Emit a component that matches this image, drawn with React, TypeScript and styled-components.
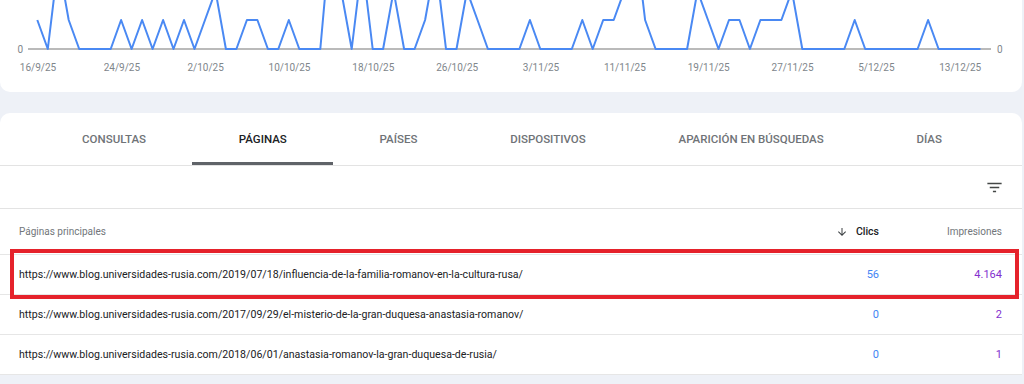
import styled, { createGlobalStyle } from "styled-components";

const GlobalStyle = createGlobalStyle`
  body {
    margin: 0;
    background: #eef1f7;
    font-family: Roboto, "Liberation Sans", sans-serif;
  }
`;

// clics por día, del 16/9/25 al 15/12/25
const clicks = [
  1, 0, 3, 1, 0, 0, 0, 0, 1, 0, 1, 0, 1, 0, 1, 0, 1, 2, 0, 0, 1, 1, 0, 0, 1, 0,
  0, 0, 4, 2, 0, 3, 0, 0, 2, 0, 0, 1, 3, 0, 0, 2, 1, 0, 0, 0, 0, 1, 0, 0, 0, 0,
  1, 0, 1, 1, 2, 4, 1, 0, 0, 0, 0, 2, 1, 0, 1, 1, 0, 1, 1, 1, 2, 0, 0, 0, 0, 0,
  1, 0, 0, 0, 0, 0, 0, 1, 0, 0, 0, 0, 0,
];

const dates = [
  "16/9/25", "24/9/25", "2/10/25", "10/10/25", "18/10/25", "26/10/25",
  "3/11/25", "11/11/25", "19/11/25", "27/11/25", "5/12/25", "13/12/25",
];

const tabs = ["CONSULTAS", "PÁGINAS", "PAÍSES", "DISPOSITIVOS", "APARICIÓN EN BÚSQUEDAS", "DÍAS"];

const pages = [
  {
    url: "https://www.blog.universidades-rusia.com/2019/07/18/influencia-de-la-familia-romanov-en-la-cultura-rusa/",
    clicks: "56",
    impressions: "4.164",
    marked: true,
  },
  {
    url: "https://www.blog.universidades-rusia.com/2017/09/29/el-misterio-de-la-gran-duquesa-anastasia-romanov/",
    clicks: "0",
    impressions: "2",
  },
  {
    url: "https://www.blog.universidades-rusia.com/2018/06/01/anastasia-romanov-la-gran-duquesa-de-rusia/",
    clicks: "0",
    impressions: "1",
  },
];

const X0 = 37.3;
const STEP = 10.48;
const BASE = 49;
const UNIT = 29;

function Chart() {
  const points = clicks.map((v, i) => `${(X0 + i * STEP).toFixed(1)},${BASE - v * UNIT}`).join(" ");
  return (
    <ChartSvg width="1022" height="80" viewBox="0 0 1022 80">
      <line x1="28" y1={BASE} x2="991" y2={BASE} stroke="#a3a3a3" strokeWidth="1.5" />
      <polyline points={points} fill="none" stroke="#4a89f3" strokeWidth="2" strokeLinejoin="round" />
      <AxisText x="23" y="53" textAnchor="end">0</AxisText>
      <AxisText x="997" y="53">0</AxisText>
      {dates.map((d, i) => (
        <AxisText key={d} x={X0 + i * 8 * STEP + 0.7} y="71" textAnchor="middle">
          {d}
        </AxisText>
      ))}
    </ChartSvg>
  );
}

function FilterIcon() {
  return (
    <svg width="19" height="19" viewBox="0 0 24 24" fill="#444746">
      <path d="M10 18h4v-2h-4v2zM3 6v2h18V6H3zm3 7h12v-2H6v2z" />
    </svg>
  );
}

function ArrowDown() {
  return (
    <svg width="12" height="12" viewBox="0 0 24 24" fill="#3c4043">
      <path d="M20 12l-1.41-1.41L13 16.17V4h-2v12.17l-5.58-5.59L4 12l8 8 8-8z" />
    </svg>
  );
}

export default function App() {
  return (
    <>
      <GlobalStyle />
      <Page>
        <ChartCard>
          <Chart />
        </ChartCard>

        <TableCard>
          <TabBar>
            {tabs.map((t) => (
              <Tab key={t} $active={t === "PÁGINAS"}>
                {t}
              </Tab>
            ))}
          </TabBar>

          <Toolbar>
            <FilterIcon />
          </Toolbar>

          <HeaderRow>
            <HeadCell>Páginas principales</HeadCell>
            <HeadCell $align="right" $sorted>
              <ArrowDown />
              Clics
            </HeadCell>
            <HeadCell $align="right">Impresiones</HeadCell>
          </HeaderRow>

          {pages.map((p) => (
            <Row key={p.url}>
              {p.marked && <Highlight />}
              <UrlCell>{p.url}</UrlCell>
              <Num $color="#4285f4">{p.clicks}</Num>
              <Num $color="#8430ce">{p.impressions}</Num>
            </Row>
          ))}
        </TableCard>
      </Page>
    </>
  );
}

const Page = styled.div`
  width: 1022px;
  display: flex;
  flex-direction: column;
  gap: 21px;
`;

const ChartCard = styled.div`
  background: #fff;
  border-radius: 0 0 10px 10px;
  padding-bottom: 12px;
`;

const ChartSvg = styled.svg`
  display: block;
`;

const AxisText = styled.text`
  font-family: Roboto, "Liberation Sans", sans-serif;
  font-size: 10px;
  fill: #80868b;
`;

const TableCard = styled.div`
  background: #fff;
  border-radius: 10px 10px 0 0;
`;

const TabBar = styled.div`
  display: flex;
  justify-content: center;
  height: 52px;
  padding-left: 2px;
  border-bottom: 1px solid #e3e3e3;
`;

const Tab = styled.div<{ $active?: boolean }>`
  display: flex;
  align-items: center;
  padding: 3px 46.4px 0;
  font-size: 11.5px;
  font-weight: 500;
  color: ${({ $active }) => ($active ? "#202124" : "#6f7377")};
  border-bottom: 3px solid ${({ $active }) => ($active ? "#5f6368" : "transparent")};
`;

const Toolbar = styled.div`
  display: flex;
  justify-content: flex-end;
  align-items: center;
  height: 42px;
  padding-right: 18px;
  border-bottom: 1px solid #e3e3e3;
`;

const grid = `
  display: grid;
  grid-template-columns: 1fr 120px 123px;
  align-items: center;
  padding: 0 20px 0 19px;
  border-bottom: 1px solid #e6e6e6;
`;

const HeaderRow = styled.div`
  ${grid}
  height: 45px;
`;

const HeadCell = styled.div<{ $align?: string; $sorted?: boolean }>`
  display: flex;
  align-items: center;
  justify-content: ${({ $align }) => ($align === "right" ? "flex-end" : "flex-start")};
  gap: 8px;
  font-size: ${({ $sorted }) => ($sorted ? "10.5px" : "10px")};
  font-weight: ${({ $sorted }) => ($sorted ? 500 : 400)};
  color: ${({ $sorted }) => ($sorted ? "#202124" : "#72767a")};
`;

const Row = styled.div`
  ${grid}
  position: relative;
  height: 39px;
`;

const Highlight = styled.div`
  position: absolute;
  top: -6px;
  bottom: -5px;
  left: 10px;
  right: 3px;
  border: 4px solid #e5222b;
  pointer-events: none;
`;

const UrlCell = styled.div`
  font-size: 10.6px;
  color: #202124;
  white-space: nowrap;
`;

const Num = styled.div<{ $color: string }>`
  text-align: right;
  font-size: 11px;
  color: ${({ $color }) => $color};
`;
